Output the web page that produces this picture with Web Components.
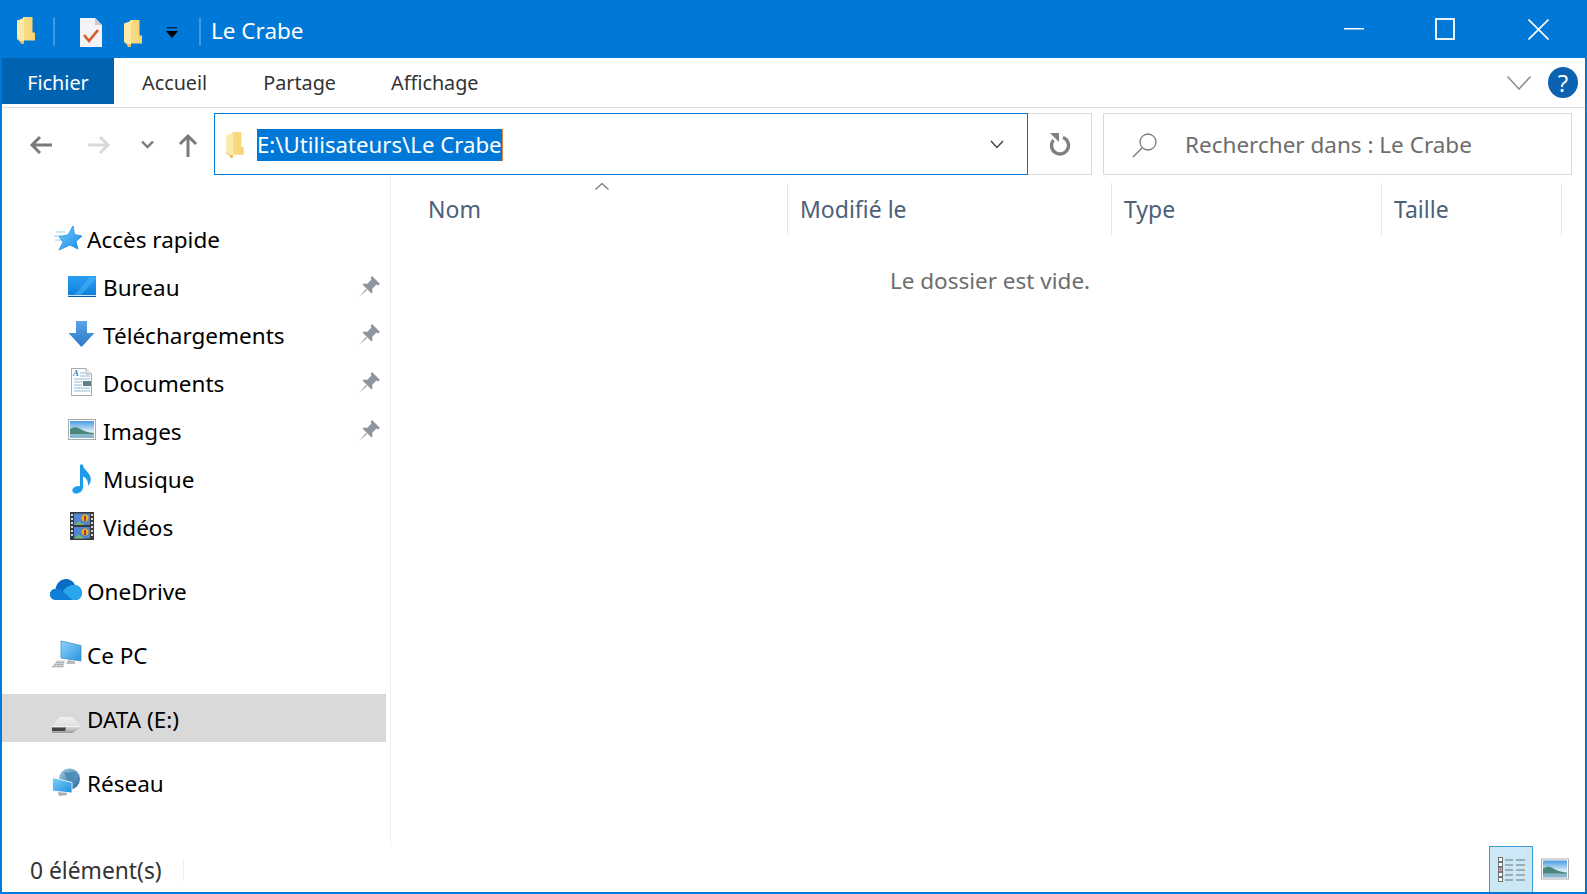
<!DOCTYPE html>
<html lang="fr">
<head>
<meta charset="utf-8">
<title>Le Crabe</title>
<style>
    html, body { margin: 0; height: 100%; background: #fff; }
    body { font-family: "Noto Sans", "Open Sans", sans-serif; font-size: 23px; }
</style>
</head>
<body>
<fx-window>
    <fx-titlebar slot="top">Le Crabe</fx-titlebar>
    <fx-ribbon slot="top"></fx-ribbon>
    <fx-addressbar slot="top" path="E:\Utilisateurs\Le Crabe" search="Rechercher dans : Le Crabe"></fx-addressbar>
    <fx-nav slot="nav">
        <fx-group>
            <fx-item icon="star">Accès rapide</fx-item>
            <fx-item icon="desktop" level="1" pinned>Bureau</fx-item>
            <fx-item icon="download" level="1" pinned>Téléchargements</fx-item>
            <fx-item icon="document" level="1" pinned>Documents</fx-item>
            <fx-item icon="picture" level="1" pinned>Images</fx-item>
            <fx-item icon="music" level="1">Musique</fx-item>
            <fx-item icon="video" level="1">Vidéos</fx-item>
        </fx-group>
        <fx-group><fx-item icon="onedrive">OneDrive</fx-item></fx-group>
        <fx-group><fx-item icon="pc">Ce PC</fx-item></fx-group>
        <fx-group><fx-item icon="disk" selected>DATA (E:)</fx-item></fx-group>
        <fx-group><fx-item icon="network">Réseau</fx-item></fx-group>
    </fx-nav>
    <fx-list slot="list">Le dossier est vide.</fx-list>
    <fx-statusbar slot="bottom">0 élément(s)</fx-statusbar>
</fx-window>

<script>
const folderSvg = (w, h, id) => `
    <svg width="${w}" height="${h}" viewBox="0 0 18 27">
        <defs><linearGradient id="${id}" x1="0" x2="1"><stop offset="0" stop-color="#f9dc8a"/><stop offset="1" stop-color="#f6d36f"/></linearGradient></defs>
        <path d="M6 0H15.500V15.500H18V23.500H6Z" fill="url(#${id})"/>
        <path d="M0 3.500L7 1V26.500L4 27L3.500 25L0 22Z" fill="#fde9a8"/>
        <path d="M7 1V26.500L4 27L3.500 25L0 22V21L3.500 24L7 24Z" fill="#e6b04e" opacity=".75"/>
    </svg>`;

const photoBody = `
    <rect x="2.500" y="4.500" width="27" height="20" fill="#fff" stroke="#a7abb0"/>
    <rect x="4" y="6" width="24" height="17" fill="url(#sky)"/>
    <path d="M4 14C9 11 12 12 16 15C20 17 25 18 28 18V20H4Z" fill="#4a8778"/>
    <rect x="4" y="19" width="24" height="4" fill="#8ab7cd"/>
    <defs><linearGradient id="sky" x1="0" x2="0" y1="0" y2="1"><stop offset="0" stop-color="#4a9be0"/><stop offset=".6" stop-color="#d6ebf6"/></linearGradient></defs>`;

// all nav icons are drawn on the same 34x34 box
const navIcons = {
    star: `
        <defs><linearGradient id="g" x1="0" x2="1" y1="0" y2="1"><stop offset="0" stop-color="#6ed0ff"/><stop offset="1" stop-color="#1b87e6"/></linearGradient></defs>
        <path d="M6 9H15M4 13H10M5 17H12" stroke="#8fcdf4" stroke-width="1.200"/>
        <path d="M23 3L24.500 11.500L32 13L26 18.500L28 26L20 22L9 27L13 19L9 13.500L18 12Z" fill="url(#g)" stroke="#1d8ee0" stroke-width=".8"/>`,
    desktop: `
        <defs><linearGradient id="g" x1="0" x2="0" y1="0" y2="1"><stop offset="0" stop-color="#2a9ef5"/><stop offset="1" stop-color="#0f7fd9"/></linearGradient></defs>
        <rect x="2" y="5" width="28" height="20" fill="url(#g)"/>
        <path d="M8 24L24 6H30V8L15 24Z" fill="#4db4fa" opacity=".55"/>
        <rect x="2" y="24" width="28" height="1" fill="#cde8fb"/>
        <rect x="2" y="25" width="28" height="1" fill="#0b5fa6"/>`,
    download: `
        <defs><linearGradient id="g" x1="0" x2="0" y1="0" y2="1"><stop offset="0" stop-color="#5ba4e6"/><stop offset="1" stop-color="#2c78c8"/></linearGradient></defs>
        <path d="M10 2H21V14H28.500L15.500 28L2.500 14H10Z" fill="url(#g)"/>`,
    document: `
        <path d="M5.500 1.500H20L25.500 7V28.500H5.500Z" fill="#fff" stroke="#a9adb2"/>
        <path d="M20 1.500V7H25.500" fill="#e7ebef" stroke="#a9adb2"/>
        <text x="7" y="9" font-family="Liberation Serif, serif" font-style="italic" font-weight="700" font-size="8.500" fill="#2a7fd0">A</text>
        <path d="M14 6H19M14 9H24M8 12H24M8 15H16M8 18H16M8 21H24M8 24H24" stroke="#8fb8d8"/>
        <rect x="17" y="14" width="8" height="5" fill="#5f7e86"/>`,
    picture: photoBody,
    music: `
        <path d="M14 2L16.500 1C17 6 23 9 24.500 14C25.500 18 24 21 22 23C22.500 19 21 15 17 13.500V24C17 28 13 31 9.500 30.500C6.500 30 5.500 27.500 7 25.500C8.500 23.500 11.500 22.500 14 23.500Z" fill="#1e9be8"/>`,
    video: `
        <rect x="4" y="1" width="24" height="28" fill="#3a3a3a"/>
        <rect x="8" y="2.500" width="16" height="11.500" fill="#4f86cf"/>
        <rect x="8" y="16" width="16" height="11.500" fill="#4f86cf"/>
        <path d="M8 14L13 10L18 14ZM8 27.500L13 23.500L18 27.500Z" fill="#79b36b"/>
        <circle cx="19" cy="7" r="3.500" fill="#e8b321"/><circle cx="19" cy="21" r="3.500" fill="#e8b321"/>
        <path d="M18 5H20V10H18ZM18 19H20V24H18Z" fill="#b3312c"/>
        <path d="M5 3h2v2h-2zM5 7h2v2h-2zM5 11h2v2h-2zM5 15h2v2h-2zM5 19h2v2h-2zM5 23h2v2h-2zM25 3h2v2h-2zM25 7h2v2h-2zM25 11h2v2h-2zM25 15h2v2h-2zM25 19h2v2h-2zM25 23h2v2h-2z" fill="#d8d8d8"/>`,
    onedrive: `
        <path d="M7 25C2 25 0 22 0 19.500C0 16 3 14 5.500 14C6.500 8 11 4 16 4C20 4 23.500 6.500 25 10C29 10.500 32 14 32 18C32 22 29 25 25.500 25Z" fill="#0a6cc4"/>
        <path d="M5.500 14C9 13.500 11 15 13 16.500L22 25H7C2 25 0 22 0 19.500C0 16 3 14 5.500 14Z" fill="#0f7fd8"/>
        <path d="M13 16.500C15 12 20 9.500 25 10C29 10.500 32 14 32 18C32 22 29 25 25.500 25H22Z" fill="#28a8ea"/>`,
    pc: `
        <defs><linearGradient id="g" x1="0" x2="1" y1="0" y2="1"><stop offset="0" stop-color="#8fd3fa"/><stop offset="1" stop-color="#2a93df"/></linearGradient></defs>
        <path d="M11 2L31 6.500V22L11 19Z" fill="url(#g)" stroke="#3f8fc4" stroke-width=".8"/>
        <path d="M18 21L25 22V25H16Z" fill="#b8bcc0"/>
        <path d="M7 21.500H15L13.500 28.500H1Z" fill="#cfd2d6"/>
        <path d="M6.500 23.500H14M4.500 25.500H13.500M2.500 27.500H13.500" stroke="#9ea3a8" stroke-dasharray="1.500 .8"/>`,
    disk: `
        <defs><linearGradient id="g" x1="0" x2="0" y1="0" y2="1"><stop offset="0" stop-color="#f0f0f0"/><stop offset=".6" stop-color="#dedede"/><stop offset="1" stop-color="#9a9a9a"/></linearGradient></defs>
        <path d="M10 14H22L30 21V25L22 30H2V23Z" fill="url(#g)"/>
        <path d="M2 23.500H30" stroke="#f8f8f8" stroke-width=".8"/>
        <path d="M2 24.500H16L15 28H2Z" fill="#444"/>`,
    network: `
        <defs><linearGradient id="g" x1="0" x2="1" y1="0" y2="1"><stop offset="0" stop-color="#9fc9e4"/><stop offset="1" stop-color="#2a6a9e"/></linearGradient><linearGradient id="s" x1="0" x2="1" y1="0" y2="1"><stop offset="0" stop-color="#7fd0fa"/><stop offset="1" stop-color="#1f90e0"/></linearGradient></defs>
        <circle cx="19.500" cy="12" r="10.500" fill="url(#g)"/>
        <path d="M14 5C18 7 23 4 27 5C23 9 25 13 21 16C16 15 16 10 14 5Z" fill="#4f8cb8"/>
        <path d="M2.500 10.500L22 15.500V26L2.500 24Z" fill="url(#s)" stroke="#fff" stroke-width=".8"/>
        <path d="M8 25L17 26V28L9 29Z" fill="#a9adb2"/>`
};

const windowTemplate = `
    <style>
        :host {
            display: flex;
            flex-direction: column;
            box-sizing: border-box;
            height: 894px;
            border: solid #0078d7;
            border-width: 0 2px 2px 2px;
            background: #fff;
            color: #000;
        }
        #body { display: flex; flex: 1; min-height: 0; }
    </style>
    <slot name="top"></slot>
    <div id="body">
        <slot name="nav"></slot>
        <slot name="list"></slot>
    </div>
    <slot name="bottom"></slot>
`;

class FxWindow extends HTMLElement {
    constructor() {
        super();
        this.attachShadow({mode: "open"}).innerHTML = windowTemplate;
    }
}

const titlebarTemplate = `
    <style>
        :host {
            display: flex;
            align-items: center;
            height: 58px;
            background: #0078d7;
            color: #fff;
        }
        .sep { height: 27px; border: 1px solid #3f9ae3; border-radius: 1px; box-sizing: content-box; width: 0; margin-top: 4px; }
        svg { display: block; flex: none; }
        #title { margin-left: 10px; margin-top: 2px; font-size: 22.500px; }
        #controls { margin-left: auto; display: flex; align-items: center; }
    </style>
    <span style="width:15px"></span>
    <div id="folder1" style="margin-top:2px"></div>
    <span style="width:18px"></span>
    <div class="sep"></div>
    <span style="width:25px"></span>
    <svg width="22" height="29" viewBox="0 0 22 29" style="margin-top:6px">
        <path d="M0 0H15L22 7V29H0Z" fill="#f4f4f8"/>
        <path d="M15 0V7H22Z" fill="#c8ccd2"/>
        <path d="M4 17L9 23L18 12" fill="none" stroke="#d9592c" stroke-width="2.600"/>
    </svg>
    <span style="width:22px"></span>
    <div id="folder2" style="margin-top:8px"></div>
    <span style="width:24px"></span>
    <svg width="12" height="11" viewBox="0 0 12 11" style="margin-top:6px">
        <rect x="1" y="0" width="10" height="1.500" fill="#0a2a4a"/>
        <path d="M0 4H12L6 11Z" fill="#000"/>
    </svg>
    <span style="width:21px"></span>
    <div class="sep"></div>
    <span id="title"><slot></slot></span>
    <div id="controls">
        <svg width="20" height="20" viewBox="0 0 20 20"><rect x="0" y="9" width="20" height="1.500" fill="#fff"/></svg>
        <span style="width:71px"></span>
        <svg width="20" height="22" viewBox="0 0 20 22"><rect x="1" y="1" width="18" height="20" fill="none" stroke="#fff" stroke-width="1.800"/></svg>
        <span style="width:73px"></span>
        <svg width="21" height="21" viewBox="0 0 21 21"><path d="M.5 .5L20.500 20.500M20.500 .5L.5 20.500" stroke="#fff" stroke-width="1.600"/></svg>
        <span style="width:36px"></span>
    </div>
`;

class FxTitlebar extends HTMLElement {
    constructor() {
        super();
        this.attachShadow({mode: "open"}).innerHTML = titlebarTemplate;
        this.shadowRoot.getElementById('folder1').innerHTML = folderSvg(18, 27, 'f1');
        this.shadowRoot.getElementById('folder2').innerHTML = folderSvg(18, 27, 'f2');
    }
}

const ribbonTemplate = `
    <style>
        :host {
            display: flex;
            align-items: flex-start;
            height: 50px;
            border-bottom: 1px solid #dcdcdc;
            box-sizing: border-box;
            color: #333;
            font-size: 19.800px;
        }
        .tab { height: 46px; display: flex; align-items: center; padding-top: 2px; box-sizing: border-box; }
        #file { width: 112px; justify-content: center; background: #0063b1; color: #fff; }
        #right { margin-left: auto; display: flex; align-items: center; height: 46px; padding-right: 7px; }
        #help {
            width: 30px; height: 31px; border-radius: 50%;
            background: #0a62b0; color: #fff;
            display: flex; align-items: center; justify-content: center;
            font: 400 24px "Open Sans", sans-serif;
            margin-left: 17px; margin-top: 2px;
        }
    </style>
    <div class="tab" id="file">Fichier</div>
    <div class="tab" style="margin-left:28px">Accueil</div>
    <div class="tab" style="margin-left:56px">Partage</div>
    <div class="tab" style="margin-left:55px">Affichage</div>
    <div id="right">
        <svg width="24" height="14" viewBox="0 0 24 14" style="margin-top:3px"><path d="M.5 .5L12 13L23.500 .5" fill="none" stroke="#8a8a8a" stroke-width="1.500"/></svg>
        <div id="help">?</div>
    </div>
`;

class FxRibbon extends HTMLElement {
    constructor() {
        super();
        this.attachShadow({mode: "open"}).innerHTML = ribbonTemplate;
    }
}

const addressTemplate = `
    <style>
        :host {
            display: flex;
            align-items: stretch;
            height: 62px;
            margin-top: 5px;
            font-size: 22.500px;
        }
        svg { display: block; flex: none; }
        #nav { width: 212px; display: flex; align-items: center; padding-left: 27px; box-sizing: border-box; padding-top: 1px; }
        #address {
            flex: none;
            width: 814px;
            box-sizing: border-box;
            border: 1px solid #0078d7;
            display: flex;
            align-items: center;
            padding-left: 11px;
            padding-top: 1px;
        }
        #path {
            margin-left: 13px;
            height: 32px;
            line-height: 31px;
            background: #0078d7;
            color: #fff;
            border-right: 1px solid #d9823c;
            white-space: nowrap;
            font-size: 22.200px;
        }
        #refresh {
            flex: none;
            width: 64px;
            box-sizing: border-box;
            border: 1px solid #d9d9d9;
            border-left: 0;
            display: flex;
            align-items: center;
            justify-content: center;
        }
        #search {
            flex: none;
            width: 469px;
            margin-left: 11px;
            box-sizing: border-box;
            border: 1px solid #d9d9d9;
            display: flex;
            align-items: center;
            padding-left: 28px;
            padding-top: 1px;
            color: #6d6d6d;
        }
        #search span { margin-left: 27px; }
    </style>
    <div id="nav">
        <svg width="24" height="20" viewBox="0 0 24 20"><path d="M23 10H3M11 2L3 10L11 18" fill="none" stroke="#7a7a7a" stroke-width="3"/></svg>
        <span style="width:34px"></span>
        <svg width="24" height="20" viewBox="0 0 24 20"><path d="M1 10H21M13 2L21 10L13 18" fill="none" stroke="#d9d9d9" stroke-width="3"/></svg>
        <span style="width:30px"></span>
        <svg width="13" height="9" viewBox="0 0 13 9"><path d="M1 1.500L6.500 7L12 1.500" fill="none" stroke="#7a7a7a" stroke-width="2.400"/></svg>
        <span style="width:24px"></span>
        <svg width="20" height="24" viewBox="0 0 20 24"><path d="M10 24V3M2 11L10 3L18 11" fill="none" stroke="#7a7a7a" stroke-width="3"/></svg>
    </div>
    <div id="address">
        <div id="folder"></div>
        <div id="path"></div>
        <svg style="margin-left:auto;margin-right:23px" width="14" height="9" viewBox="0 0 14 9"><path d="M1 1L7 7.500L13 1" fill="none" stroke="#444" stroke-width="1.500"/></svg>
    </div>
    <div id="refresh">
        <svg width="22" height="24" viewBox="0 0 22 24"><path d="M14 5.500A8.500 8.500 0 1 1 4.500 8" fill="none" stroke="#808080" stroke-width="3.400"/><path d="M1 1H10V10Z" fill="#808080"/></svg>
    </div>
    <div id="search">
        <svg width="26" height="26" viewBox="0 0 26 26"><circle cx="16" cy="10" r="8" fill="none" stroke="#7a7a7a" stroke-width="1.300"/><path d="M10 16L1 25" stroke="#7a7a7a" stroke-width="1.500"/></svg>
        <span></span>
    </div>
`;

class FxAddressbar extends HTMLElement {
    constructor() {
        super();
        this.attachShadow({mode: "open"}).innerHTML = addressTemplate;
        this.shadowRoot.getElementById('folder').innerHTML = folderSvg(18, 26, 'fa');
        this.shadowRoot.getElementById('path').textContent = this.getAttribute('path');
        this.shadowRoot.querySelector('#search span').textContent = this.getAttribute('search');
    }
}

const navTemplate = `
    <style>
        :host {
            display: flex;
            flex-direction: column;
            flex: none;
            width: 389px;
            box-sizing: border-box;
            padding-top: 39px;
            gap: 16px;
            border-right: 1px solid #f0f0f0;
        }
    </style>
    <slot></slot>
`;

class FxNav extends HTMLElement {
    constructor() {
        super();
        this.attachShadow({mode: "open"}).innerHTML = navTemplate;
    }
}

class FxGroup extends HTMLElement {
    constructor() {
        super();
        this.attachShadow({mode: "open"}).innerHTML = `
            <style>:host { display: flex; flex-direction: column; }</style>
            <slot></slot>
        `;
    }
}

const itemTemplate = `
    <style>
        :host {
            display: flex;
            align-items: center;
            height: 48px;
            width: 384px;
            padding-left: 48px;
            box-sizing: border-box;
            font-size: 22.500px;
            color: #000;
        }
        :host([level="1"]) { padding-left: 64px; }
        :host([selected]) { background: #d9d9d9; }
        #icon { width: 34px; height: 34px; flex: none; margin: 4px 3px 0 0; }
        #label { padding-top: 3px; }
        svg { display: block; overflow: visible; }
        #pin { display: none; margin-left: auto; margin-right: 6px; margin-top: 0; }
        :host([pinned]) #pin { display: block; }
    </style>
    <div id="icon"></div>
    <span id="label"><slot></slot></span>
    <svg id="pin" width="21" height="21" viewBox="0 0 21 21">
        <path d="M13 0L21 8L19 9.500L17.500 8.500L13 13C14 15 13.500 16.500 12.500 17.500L3.500 8.500C4.500 7.500 6.500 7 8 8L12.500 3.500L11.500 2Z" fill="#8d969e"/>
        <path d="M7 13L0 21L8 14Z" fill="#8d969e"/>
    </svg>
`;

class FxItem extends HTMLElement {
    constructor() {
        super();
        this.attachShadow({mode: "open"}).innerHTML = itemTemplate;
    }

    connectedCallback() {
        const name = this.getAttribute('icon');
        this.shadowRoot.getElementById('icon').innerHTML =
            `<svg width="34" height="34" viewBox="0 0 34 34">${navIcons[name] || ''}</svg>`;
    }
}

const listTemplate = `
    <style>
        :host {
            display: flex;
            flex-direction: column;
            flex: 1;
            min-width: 0;
            color: #6d6d6d;
            font-size: 22.500px;
        }
        #head { display: flex; height: 52px; margin-top: 8px; color: #4c607a; position: relative; font-size: 23px; }
        .col { box-sizing: border-box; border-right: 1px solid #e5e5e5; display: flex; align-items: center; padding-left: 12px; }
        #sort { position: absolute; left: 204px; top: 0; }
        #empty { text-align: center; margin-top: 30px; padding-left: 4px; }
    </style>
    <div id="head">
        <div class="col" style="width:397px;padding-left:37px">Nom</div>
        <div class="col" style="width:324px">Modifié le</div>
        <div class="col" style="width:270px">Type</div>
        <div class="col" style="width:180px">Taille</div>
        <svg id="sort" width="14" height="7" viewBox="0 0 14 7"><path d="M.5 6.500L7 .5L13.500 6.500" fill="none" stroke="#777" stroke-width="1.200"/></svg>
    </div>
    <div id="empty"><slot></slot></div>
`;

class FxList extends HTMLElement {
    constructor() {
        super();
        this.attachShadow({mode: "open"}).innerHTML = listTemplate;
    }
}

const statusTemplate = `
    <style>
        :host {
            display: flex;
            align-items: center;
            height: 46px;
            flex: none;
            padding-left: 28px;
            padding-right: 16px;
            font-size: 22.800px;
            color: #333;
        }
        #text { padding-top: 3px; }
        #sep { width: 1px; height: 22px; background: #ececec; margin-left: 21px; margin-top: 2px; }
        #views { margin-left: auto; display: flex; align-items: center; height: 100%; }
        #details {
            width: 44px;
            height: 46px;
            box-sizing: border-box;
            background: #cce8f7;
            border: 1px solid #3f9bd6;
            border-bottom: 0;
            display: flex;
            align-items: center;
            justify-content: center;
            padding-left: 2px;
        }
        svg { display: block; }
    </style>
    <span id="text"><slot></slot></span>
    <div id="sep"></div>
    <div id="views">
        <div id="details">
            <svg width="28" height="25" viewBox="0 0 28 25">
                <g fill="#fff" stroke="#6f7275"><rect x=".5" y=".5" width="4" height="4"/><rect x=".5" y="5.500" width="4" height="4"/><rect x=".5" y="10.500" width="4" height="4"/><rect x=".5" y="15.500" width="4" height="4"/><rect x=".5" y="20.500" width="4" height="4"/></g>
                <path d="M7 3H15M18 3H27M7 8H15M18 8H27M7 13H15M18 13H27M7 18H15M18 18H27M7 23H15M18 23H27" stroke="#6f7275" stroke-width="1.200"/>
                <rect x="1.500" y="11.500" width="2" height="2" fill="#a33"/>
            </svg>
        </div>
        <svg style="margin-left:8px" width="28" height="22" viewBox="2 4 28 21">${photoBody}</svg>
    </div>
`;

class FxStatusbar extends HTMLElement {
    constructor() {
        super();
        this.attachShadow({mode: "open"}).innerHTML = statusTemplate;
    }
}

window.customElements.define('fx-window', FxWindow);
window.customElements.define('fx-titlebar', FxTitlebar);
window.customElements.define('fx-ribbon', FxRibbon);
window.customElements.define('fx-addressbar', FxAddressbar);
window.customElements.define('fx-nav', FxNav);
window.customElements.define('fx-group', FxGroup);
window.customElements.define('fx-item', FxItem);
window.customElements.define('fx-list', FxList);
window.customElements.define('fx-statusbar', FxStatusbar);
</script>
</body>
</html>
